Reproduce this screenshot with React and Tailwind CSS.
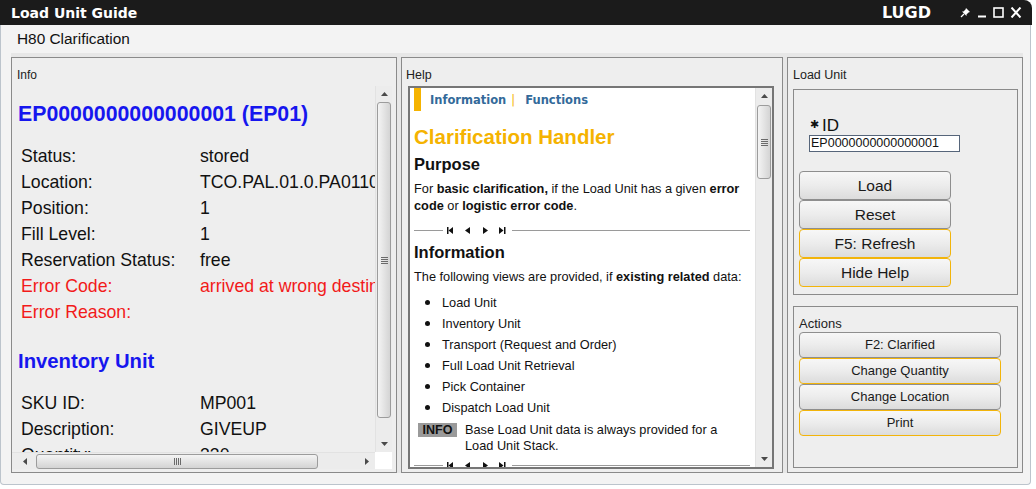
import React from "react";

function Tri({ dir = "up", className = "" }) {
  const pts = {
    up: "0,4 7,4 3.5,0",
    down: "0,0 7,0 3.5,4",
    left: "4,0 4,7 0,3.5",
    right: "0,0 0,7 4,3.5",
  }[dir];
  const w = dir === "up" || dir === "down" ? 7 : 4;
  const h = dir === "up" || dir === "down" ? 4 : 7;
  return (
    <svg width={w} height={h} viewBox={`0 0 ${w} ${h}`} className={className}>
      <polygon points={pts} fill="#4a4a4a" />
    </svg>
  );
}

function Grip({ vertical = true }) {
  if (vertical) {
    return (
      <div className="flex flex-col gap-[1px]">
        {[0, 1, 2, 3].map((i) => (
          <div key={i} className="w-[7px] h-[1px] bg-[#6a6a6a]" />
        ))}
      </div>
    );
  }
  return (
    <div className="flex flex-row gap-[1px]">
      {[0, 1, 2, 3].map((i) => (
        <div key={i} className="w-[1px] h-[7px] bg-[#6a6a6a]" />
      ))}
    </div>
  );
}

function VScroll({ thumbMt, thumbH }) {
  return (
    <div className="w-[17px] h-full shrink-0 flex flex-col bg-[#ececec] border-l border-[#e2e2e2]">
      <div className="h-[16px] shrink-0 flex items-center justify-center">
        <Tri dir="up" />
      </div>
      <div
        className="mx-[1px] shrink-0 rounded-[3px] border border-[#9c9c9c] bg-gradient-to-r from-[#f4f4f4] to-[#d4d4d4] flex items-center justify-center"
        style={{ marginTop: thumbMt, height: thumbH }}
      >
        <Grip />
      </div>
      <div className="flex-1" />
      <div className="h-[16px] shrink-0 flex items-center justify-center">
        <Tri dir="down" />
      </div>
    </div>
  );
}

function NavSep() {
  return (
    <div className="h-[10px] flex items-center">
      <div className="w-[29px] h-[1px] bg-[#9a9a9a]" />
      <div className="flex items-center ml-[4px]">
        <svg width="7" height="7" viewBox="0 0 7 7" className="mr-[11px]">
          <rect x="0" y="0" width="1.5" height="7" fill="#111" />
          <polygon points="6,0 6,7 1.5,3.5" fill="#111" />
        </svg>
        <svg width="5" height="7" viewBox="0 0 5 7" className="mr-[13px]">
          <polygon points="5,0 5,7 0,3.5" fill="#111" />
        </svg>
        <svg width="5" height="7" viewBox="0 0 5 7" className="mr-[11px]">
          <polygon points="0,0 0,7 5,3.5" fill="#111" />
        </svg>
        <svg width="7" height="7" viewBox="0 0 7 7">
          <polygon points="0,0 0,7 4.5,3.5" fill="#111" />
          <rect x="5" y="0" width="1.5" height="7" fill="#111" />
        </svg>
      </div>
      <div className="flex-1 ml-[6px] h-[1px] bg-[#9a9a9a]" />
    </div>
  );
}

function Btn({ children, orange, h, text }) {
  return (
    <div
      className={`w-full rounded-[4px] border flex items-center justify-center bg-gradient-to-b from-[#f7f7f7] via-[#ececec] to-[#dcdcdc] text-[#1a1a1a] ${
        orange ? "border-[#f2b40a]" : "border-[#8e8e8e]"
      } ${h} ${text}`}
    >
      {children}
    </div>
  );
}

const rows1 = [
  ["Status:", "stored", false],
  ["Location:", "TCO.PAL.01.0.PA0110.01", false],
  ["Position:", "1", false],
  ["Fill Level:", "1", false],
  ["Reservation Status:", "free", false],
  ["Error Code:", "arrived at wrong destination", true],
  ["Error Reason:", "", true],
];

const rows2 = [
  ["SKU ID:", "MP001"],
  ["Description:", "GIVEUP"],
  ["Quantity:", "330"],
];

function Row({ l, v, red }) {
  return (
    <div
      className={`flex h-[26px] items-center whitespace-nowrap text-[17.7px] ${
        red ? "text-[#f21a1a]" : "text-[#111]"
      }`}
    >
      <div className="w-[179px] shrink-0">{l}</div>
      <div>{v}</div>
    </div>
  );
}

export default function App() {
  return (
    <div className="w-[1036px] h-[489px] bg-white font-['Liberation_Sans',Arial,sans-serif] text-[#111] overflow-hidden">
      <div className="w-[1032px] h-[485px] flex flex-col">
        {/* Title bar */}
        <div className="h-[25px] shrink-0 bg-[#1b1b1b] rounded-tr-[8px] flex items-center text-white font-['DejaVu_Sans',sans-serif] font-bold">
          <div className="pl-[11px] text-[14px] leading-none">Load Unit Guide</div>
          <div className="flex-1" />
          <div className="text-[16px] leading-none mr-[29px]">LUGD</div>
          <div className="flex items-center gap-[6px] mr-[10px]">
            <svg width="11" height="11" viewBox="0 0 11 11">
              <path d="M6 1 L10 5 L8.5 5.5 L6.5 7.5 L6.5 9 L2 4.5 L3.5 4.5 L5.5 2.5 Z" fill="white" />
              <path d="M4 7 L1 10" stroke="white" strokeWidth="1.3" />
            </svg>
            <svg width="10" height="11" viewBox="0 0 10 11">
              <rect x="1" y="8.5" width="8" height="2" fill="white" />
            </svg>
            <svg width="11" height="11" viewBox="0 0 11 11">
              <rect x="1" y="1" width="9" height="9" fill="none" stroke="white" strokeWidth="1.6" />
            </svg>
            <svg width="12" height="11" viewBox="0 0 12 11">
              <path d="M1.5 0.5 L10.5 10.5 M10.5 0.5 L1.5 10.5" stroke="white" strokeWidth="2" />
            </svg>
          </div>
        </div>

        {/* Body */}
        <div className="flex-1 min-h-0 flex flex-col bg-[#f3f3f3] border-l border-r border-b border-[#bcc4cc] rounded-b-[4px] mr-[1px]">
          <div className="h-[28px] shrink-0 flex items-center pl-[16px] text-[15.4px] text-[#111]">H80 Clarification</div>

          <div className="ml-[10px] mr-[7px] h-[420px] shrink-0 bg-[#e7e7e7] pt-[4px] flex gap-[4px]">
            {/* Left panel */}
            <div className="w-[386px] h-[416px] border border-[#8a8a8a] bg-[#eeeeee] flex flex-col pr-[4px] pb-[3px] overflow-hidden">
              <div className="h-[28px] shrink-0 pt-[10px] pl-[5px] text-[12px] leading-[14px] text-[#222]">Info</div>
              <div className="flex-1 min-h-0 flex flex-col">
                <div className="flex-1 flex min-h-0">
                  <div className="flex-1 overflow-hidden pl-[6px]">
                    <div className="mt-[16px] h-[24px] leading-[24px] text-[21.3px] font-bold text-[#1616ee] whitespace-nowrap">
                      EP0000000000000001 (EP01)
                    </div>
                    <div className="mt-[17px] pl-[3px]">
                      {rows1.map(([l, v, r]) => (
                        <Row key={l} l={l} v={v} red={r} />
                      ))}
                    </div>
                    <div className="mt-[24px] h-[24px] leading-[24px] text-[20.3px] font-bold text-[#1616ee] whitespace-nowrap">
                      Inventory Unit
                    </div>
                    <div className="mt-[17px] pl-[3px]">
                      {rows2.map(([l, v]) => (
                        <Row key={l} l={l} v={v} />
                      ))}
                    </div>
                  </div>
                  <VScroll thumbMt={0} thumbH={316} />
                </div>
                <div className="h-[17px] shrink-0 flex">
                  <div className="flex-1 flex items-center bg-[#ececec] border-t border-[#e2e2e2]">
                    <div className="w-[22px] flex items-center justify-center pl-[4px]">
                      <Tri dir="left" />
                    </div>
                    <div className="ml-[2px] w-[282px] h-[15px] rounded-[3px] border border-[#9c9c9c] bg-gradient-to-b from-[#f4f4f4] to-[#d4d4d4] flex items-center justify-center">
                      <Grip vertical={false} />
                    </div>
                    <div className="flex-1" />
                    <div className="w-[17px] flex items-center justify-center">
                      <Tri dir="right" />
                    </div>
                  </div>
                  <div className="w-[17px] bg-white" />
                </div>
              </div>
            </div>

            {/* Middle panel */}
            <div className="w-[382px] h-[416px] border border-[#8a8a8a] bg-[#eeeeee] flex flex-col pl-[6px] pr-[8px] pb-[3px] overflow-hidden">
              <div className="h-[28px] shrink-0 pt-[10px] -ml-[2px] text-[12.5px] leading-[14px] text-[#222]">Help</div>
              <div className="flex-1 min-h-0 border-2 border-[#767676] bg-white flex">
                <div className="flex-1 overflow-hidden pl-[4px] pr-[5px] text-[12.75px] text-[#111]">
                  <div className="h-[23px] flex items-center">
                    <div className="w-[7px] h-full bg-[#f5b300]" />
                    <div className="ml-[9px] pt-[2px] text-[11.5px] font-bold font-['DejaVu_Sans',sans-serif] text-[#336a9a] whitespace-nowrap">
                      Information<span className="ml-[5px] text-[#f5b300] font-normal">|</span>
                      <span className="ml-[10px]">Functions</span>
                    </div>
                  </div>
                  <div className="mt-[14px] h-[24px] leading-[24px] text-[20.5px] font-bold text-[#f5b300] whitespace-nowrap">
                    Clarification Handler
                  </div>
                  <div className="mt-[5px] h-[20px] leading-[20px] text-[16.5px] font-bold">Purpose</div>
                  <p className="mt-[6px] leading-[17px]">
                    For <b>basic clarification,</b> if the Load Unit has a given <b>error code</b> or <b>logistic error code</b>.
                  </p>
                  <div className="mt-[11px]">
                    <NavSep />
                  </div>
                  <div className="mt-[7px] h-[20px] leading-[20px] text-[16.5px] font-bold">Information</div>
                  <p className="mt-[6px] leading-[17px] whitespace-nowrap">
                    The following views are provided, if <b>existing related</b> data:
                  </p>
                  <ul className="mt-[7px]">
                    {[
                      "Load Unit",
                      "Inventory Unit",
                      "Transport (Request and Order)",
                      "Full Load Unit Retrieval",
                      "Pick Container",
                      "Dispatch Load Unit",
                    ].map((t) => (
                      <li key={t} className="h-[21px] flex items-center">
                        <span className="w-[5px] h-[5px] rounded-full bg-[#111] ml-[11px] mr-[12px]" />
                        {t}
                      </li>
                    ))}
                  </ul>
                  <div className="mt-[4px] flex items-start">
                    <div className="ml-[4px] mt-[1px] w-[39px] h-[14px] bg-[#9a9a9a] text-[#111] font-bold text-[12.5px] leading-[14px] flex items-center justify-center">
                      INFO
                    </div>
                    <div className="ml-[8px] leading-[16px]">
                      Base Load Unit data is always provided for a
                      <br />
                      Load Unit Stack.
                    </div>
                  </div>
                  <div className="mt-[6px]">
                    <NavSep />
                  </div>
                </div>
                <VScroll thumbMt={1} thumbH={74} />
              </div>
            </div>

            {/* Right panel */}
            <div className="w-[236px] h-[416px] border border-[#8a8a8a] bg-[#eeeeee] flex flex-col pl-[5px] pr-[4px]">
              <div className="h-[31px] shrink-0 pt-[10px] text-[12.5px] leading-[14px] text-[#222]">Load Unit</div>
              <div className="h-[206px] shrink-0 border border-[#8a8a8a] flex flex-col pl-[5px] pr-[66px]">
                <div className="mt-[27px] ml-[11px] h-[18px] flex items-center text-[17px] leading-[18px]">
                  <span className="text-[11px] mr-[3px] -mt-[4px]">✱</span>ID
                </div>
                <div className="ml-[10px] w-[151px] h-[17px] border border-[#56657a] bg-white text-[12.5px] leading-[15px] pl-[1px] text-[#111]">
                  EP0000000000000001
                </div>
                <div className="mt-[19px] flex flex-col">
                  <Btn h="h-[29px]" text="text-[15.5px]">Load</Btn>
                  <Btn h="h-[29px]" text="text-[15.5px]">Reset</Btn>
                  <Btn h="h-[29px]" text="text-[15.5px]" orange>F5: Refresh</Btn>
                  <Btn h="h-[29px]" text="text-[15.5px]" orange>Hide Help</Btn>
                </div>
              </div>
              <div className="mt-[11px] h-[162px] shrink-0 border border-[#8a8a8a] flex flex-col pl-[5px] pr-[16px]">
                <div className="h-[25px] pt-[10px] text-[13px] leading-[14px] text-[#222]">Actions</div>
                <div className="flex flex-col">
                  <Btn h="h-[26px]" text="text-[13px]">F2: Clarified</Btn>
                  <Btn h="h-[26px]" text="text-[13px]" orange>Change Quantity</Btn>
                  <Btn h="h-[26px]" text="text-[13px]">Change Location</Btn>
                  <Btn h="h-[26px]" text="text-[13px]" orange>Print</Btn>
                </div>
              </div>
            </div>
          </div>
        </div>
      </div>
    </div>
  );
}
